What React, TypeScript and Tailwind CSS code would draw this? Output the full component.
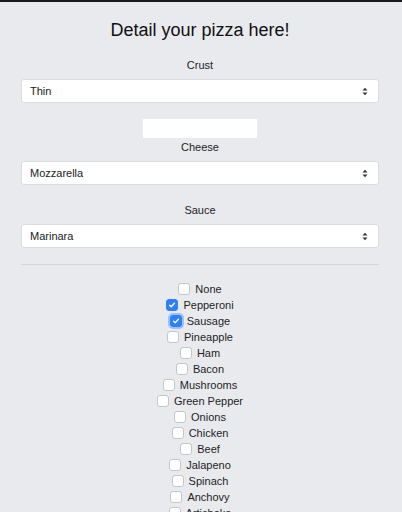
import React from 'react';

const toppings = [
  { name: 'None', checked: false },
  { name: 'Pepperoni', checked: true },
  { name: 'Sausage', checked: true, focused: true },
  { name: 'Pineapple', checked: false },
  { name: 'Ham', checked: false },
  { name: 'Bacon', checked: false },
  { name: 'Mushrooms', checked: false },
  { name: 'Green Pepper', checked: false },
  { name: 'Onions', checked: false },
  { name: 'Chicken', checked: false },
  { name: 'Beef', checked: false },
  { name: 'Jalapeno', checked: false },
  { name: 'Spinach', checked: false },
  { name: 'Anchovy', checked: false },
  { name: 'Artichoke', checked: false },
];

function SelectBox({ value }: { value: string }) {
  return (
    <div className="flex items-center justify-between h-[24px] bg-white border border-[#dadce0] rounded-[3px] pl-[8px] pr-[10px] text-[11px] text-[#222]">
      <span>{value}</span>
      <svg width="6" height="9" viewBox="0 0 6 9">
        <path d="M0.5 3.5 L3 0.8 L5.5 3.5 Z" fill="#333" />
        <path d="M0.5 5.5 L3 8.2 L5.5 5.5 Z" fill="#333" />
      </svg>
    </div>
  );
}

function Check({ checked, focused }: { checked: boolean; focused?: boolean }) {
  return (
    <span
      className={`flex items-center justify-center w-[12px] h-[12px] rounded-[3px] ${
        checked ? 'bg-[#2f7ff5] border border-[#2f7ff5]' : 'bg-white border border-[#c4c6ca]'
      } ${focused ? 'ring-[2px] ring-[#9cc2fb]' : ''}`}
    >
      {checked && (
        <svg width="8" height="8" viewBox="0 0 8 8">
          <path d="M1.6 4.2 L3.2 5.7 L6.4 2.3" stroke="white" strokeWidth="1.3" fill="none" strokeLinecap="round" strokeLinejoin="round" />
        </svg>
      )}
    </span>
  );
}

export default function App() {
  return (
    <div
      className="h-[512px] overflow-hidden bg-[#e9eaee] border-t-2 border-[#1a1a1a] text-[#1e1e1e]"
      style={{ fontFamily: '"Liberation Sans", Arial, sans-serif' }}
    >
      <div className="pl-[21px] pr-[23px]">
        <h1 className="text-center text-[18px] leading-[19px] pt-[19px] text-[#111]">Detail your pizza here!</h1>

        <div className="text-center text-[11px] leading-[14px] mt-[18px]">Crust</div>
        <div className="mt-[7px]">
          <SelectBox value="Thin" />
        </div>

        <div className="flex justify-center mt-[16px]">
          <div className="w-[114px] h-[19px] bg-white" />
        </div>

        <div className="text-center text-[11px] leading-[14px] mt-[2px]">Cheese</div>
        <div className="mt-[7px]">
          <SelectBox value="Mozzarella" />
        </div>

        <div className="text-center text-[11px] leading-[14px] mt-[18px]">Sauce</div>
        <div className="mt-[7px]">
          <SelectBox value="Marinara" />
        </div>

        <hr className="mt-[16px] border-[#d4d6da]" />

        <div className="flex flex-col items-center mt-[16px] text-[11px]">
          {toppings.map((t) => (
            <label key={t.name} className="flex items-center gap-[5px] h-[16px] leading-[16px]">
              <Check checked={t.checked} focused={t.focused} />
              <span>{t.name}</span>
            </label>
          ))}
        </div>
      </div>
    </div>
  );
}
